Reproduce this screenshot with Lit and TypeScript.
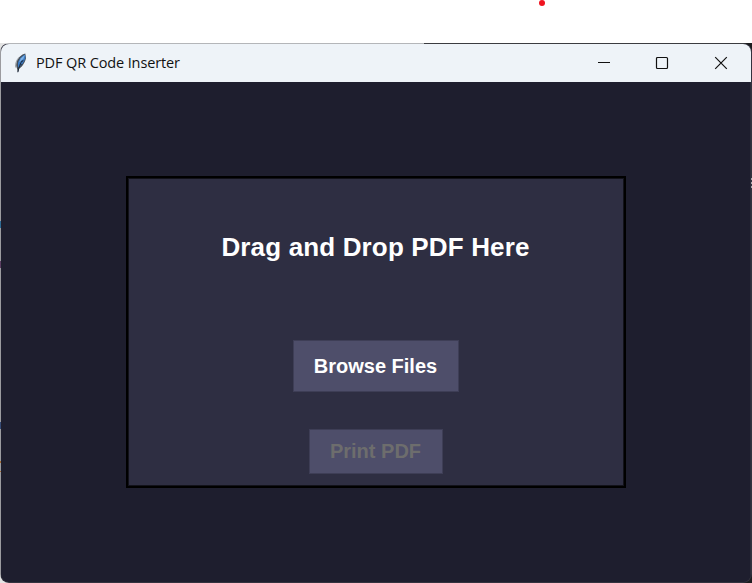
import { LitElement, html, css, svg } from "lit";
import { customElement } from "lit/decorators.js";

const feather = svg`
  <path d="M11.300 .6C7.600 1.400 3.800 4.800 2.600 9c-.6 2.200-.5 4.600.4 6.600l.8 4 1-3.700C8.400 13.800 11.200 9.500 12 5z" fill="#46505b"/>
  <path d="M11 1.600C7.800 3 4.900 6.300 4 9.800L4 14.400C7.800 12.600 10.500 8.500 11.400 4.600z" fill="#3a7bc6"/>
  <path d="M10.800 2 7 5.200 5 9.400 9.300 6z" fill="#7fb2e4"/>
  <path d="M8.300 7.500C6.300 10.500 5 13.500 3.900 19.200" fill="none" stroke="#1b2635" stroke-width="1"/>
  <path d="M9.400 7.600 7.900 8.600M7.800 11.500 6.200 12" fill="none" stroke="#1b2635" stroke-width=".8"/>
  <path d="M4.800 4.500C2.300 7.500 1 11 1.600 14.500" fill="none" stroke="#9b9fa3" stroke-width=".9"/>`;

@customElement("app-root")
export class AppRoot extends LitElement {
  static styles = css`
    :host {
      display: block;
      position: relative;
      box-sizing: border-box;
      width: 752px;
      height: 583px;
      padding-top: 43px;
      background: #fff;
      overflow: hidden;
      font-family: "Liberation Sans", Arial, sans-serif;
    }
    .dot {
      position: absolute;
      left: 539px;
      top: 0;
      width: 6px;
      height: 6px;
      border-radius: 50%;
      background: #f01420;
    }
    .backdrop {
      height: 540px;
      background: linear-gradient(90deg, #e4e4e4 0 424px, #1c1c1f 424px);
    }
    .window {
      box-sizing: border-box;
      width: 752px;
      height: 540px;
      padding: 1px;
      border-radius: 9px;
      overflow: hidden;
      background:
        linear-gradient(90deg, #b4b6b9 0 424px, #3b3c40 424px) top / 100% 1px no-repeat,
        linear-gradient(#9b9b9f, #9b9b9f) left / 1px 100% no-repeat,
        #33333f;
    }
    .frame {
      height: 538px;
      display: flex;
      flex-direction: column;
      border-radius: 8px;
      overflow: hidden;
      background: #1e1e2e;
    }
    .bar {
      flex: none;
      height: 38px;
      display: flex;
      align-items: center;
      box-sizing: border-box;
      padding-right: 1px;
      background: #eef3f8;
      color: #111;
    }
    .feather {
      width: 14px;
      height: 20px;
      margin: 0 8px 0 13px;
    }
    .name {
      flex: 1;
      font: 14.500px/20px "Open Sans", "Noto Sans", sans-serif;
      letter-spacing: -0.120px;
      white-space: nowrap;
    }
    .control {
      width: 58.500px;
      height: 38px;
      display: grid;
      place-items: center;
    }
    .control svg {
      width: 14px;
      height: 14px;
      fill: none;
      stroke: #111;
      stroke-width: 1.200;
    }
    .body {
      flex: 1;
      display: flex;
      align-items: center;
      padding-left: 125px;
      border-right: 1px solid #2c2c3a;
    }
    .drop {
      box-sizing: border-box;
      width: 500px;
      height: 312px;
      padding-right: 1px;
      border: 2px solid #000;
      box-shadow: inset 0 0 0 1px #12121a;
      background: #2e2e42;
      display: flex;
      flex-direction: column;
      align-items: center;
      font-weight: bold;
      color: #fff;
      white-space: nowrap;
    }
    .heading {
      margin-top: 54px;
      height: 30px;
      font-size: 26px;
      line-height: 30px;
      letter-spacing: 0.150px;
    }
    .button {
      box-sizing: border-box;
      display: flex;
      align-items: center;
      justify-content: center;
      border: 1px solid #3e3e56;
      background: #4e4e6a;
      font-size: 20px;
    }
    .browse {
      margin-top: 78px;
      width: 166px;
      height: 52px;
    }
    .print {
      margin-top: 37px;
      width: 134px;
      height: 45px;
      padding-bottom: 1px;
      color: #6d6d6d;
    }
    .sliver {
      position: absolute;
      left: 0;
      width: 1px;
      height: 7px;
      background: #2d6a94;
    }
    .s1 { top: 221px; }
    .s2 { top: 261px; background: #5b3e62; }
    .s3 { top: 422px; background: #354a75; }
    .s4 { top: 461px; height: 2px; background: #a56a32; }
    .s5 { top: 471px; height: 1px; background: #a56a32; }
    .s6 {
      top: 178px;
      left: 751px;
      height: 10px;
      background: repeating-linear-gradient(#a8a8ad 0 2px, #33333f 2px 4px);
    }
  `;

  render() {
    return html`
      <div class="dot"></div>
      <div class="backdrop">
        <div class="window">
          <div class="frame">
            <div class="bar">
              <svg class="feather" viewBox="0 0 14 20">${feather}</svg>
              <div class="name">PDF QR Code Inserter</div>
              <div class="control">
                <svg viewBox="0 0 14 14"><path d="M1 6.500h12" /></svg>
              </div>
              <div class="control">
                <svg viewBox="0 0 14 14"><rect x="1.500" y="1.500" width="11" height="11" rx="1" /></svg>
              </div>
              <div class="control">
                <svg viewBox="0 0 14 14"><path d="M1.200 1.200l11.600 11.600M12.800 1.200L1.200 12.800" /></svg>
              </div>
            </div>
            <div class="body">
              <div class="drop">
                <div class="heading">Drag and Drop PDF Here</div>
                <div class="button browse">Browse Files</div>
                <div class="button print">Print PDF</div>
              </div>
            </div>
          </div>
        </div>
      </div>
      ${[1, 2, 3, 4, 5, 6].map((n) => html`<div class="sliver s${n}"></div>`)}
    `;
  }
}
